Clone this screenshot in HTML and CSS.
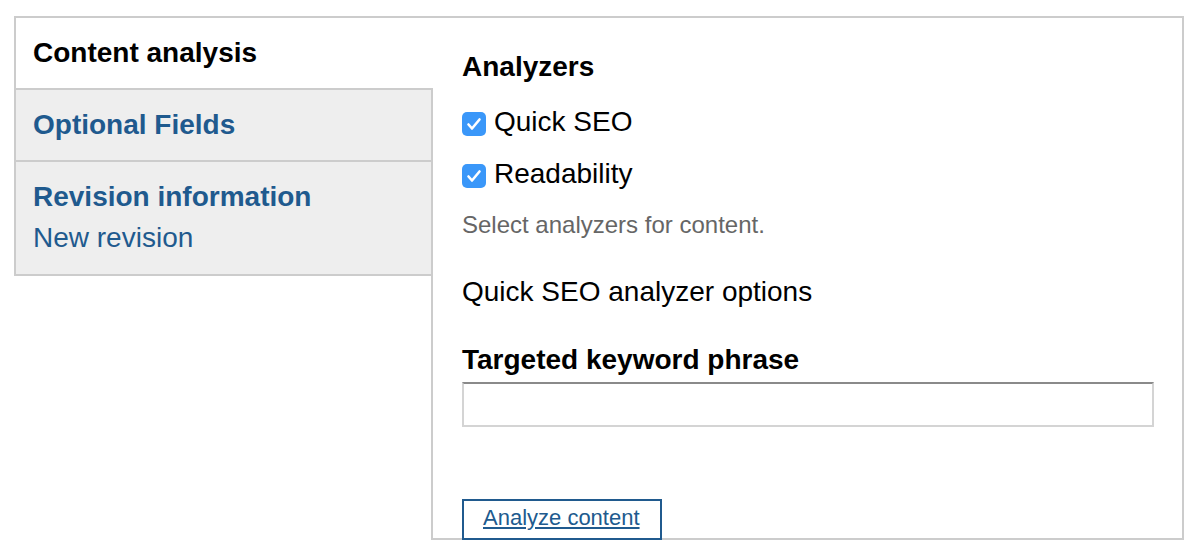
FILE: index.html
```html
<!DOCTYPE html>
<html lang="en">
<head>
    <meta charset="UTF-8">
    <title>Content analysis</title>
    <link rel="stylesheet" href="styles.css">
</head>
<body>
    <div class="vertical-tabs">
        <ul class="tab-list">
            <li class="tab active"><strong>Content analysis</strong></li>
            <li class="tab"><a href="#"><strong>Optional Fields</strong></a></li>
            <li class="tab">
                <a href="#"><strong>Revision information</strong>
                <span class="summary">New revision</span></a>
            </li>
        </ul>

        <div class="tab-pane">
            <div class="legend">Analyzers</div>
            <label class="option">
                <span class="check"><svg width="24" height="24" viewBox="0 0 24 24"><path d="M6.5 12.5l3.5 4 7.5-9" fill="none" stroke="#fff" stroke-width="2.6" stroke-linecap="round" stroke-linejoin="round"/></svg></span>
                Quick SEO
            </label>
            <label class="option">
                <span class="check"><svg width="24" height="24" viewBox="0 0 24 24"><path d="M6.5 12.5l3.5 4 7.5-9" fill="none" stroke="#fff" stroke-width="2.6" stroke-linecap="round" stroke-linejoin="round"/></svg></span>
                Readability
            </label>
            <div class="description">Select analyzers for content.</div>

            <div class="subtitle">Quick SEO analyzer options</div>

            <label class="field-label" for="keyword">Targeted keyword phrase</label>
            <input type="text" id="keyword" class="text-input">

            <button type="button" class="analyze">Analyze content</button>
        </div>
    </div>
</body>
</html>
```

FILE: styles.css
```css
body {
    margin: 0;
    padding: 16px 14px;
    font-family: "Liberation Sans", Arial, Helvetica, sans-serif;
    color: #000;
    background: #fff;
}
.vertical-tabs {
    display: flex;
    align-items: flex-start;
    width: 1170px;
}
.tab-list {
    list-style: none;
    margin: 0 -2px 0 0;
    padding: 0;
    width: 419px;
    box-sizing: border-box;
    border: 2px solid #ccc;
    border-right: none;
    position: relative;
    z-index: 1;
    flex-shrink: 0;
}
.tab {
    padding: 15px 17px;
    font-size: 28px;
    line-height: 40px;
    background: #eee;
    border-top: 2px solid #ccc;
    border-right: 2px solid #ccc;
}
.tab.active {
    background: #fff;
    border-top: none;
    border-right: none;
}
.tab a {
    color: #1f5a8e;
    text-decoration: none;
}
.tab .summary {
    display: block;
    line-height: 42px;
}
.tab-pane {
    flex: 1;
    border: 2px solid #ccc;
    padding: 29px 28px 0 29px;
}
.legend {
    font-size: 28px;
    font-weight: bold;
    line-height: 40px;
    margin-bottom: 15px;
}
.option {
    display: flex;
    align-items: center;
    gap: 8px;
    font-size: 28px;
    line-height: 40px;
    margin-bottom: 12px;
}
.check {
    width: 24px;
    height: 24px;
    margin-top: 4px;
    border-radius: 5px;
    background: #3a97f9;
    display: flex;
}
.description {
    font-size: 24px;
    line-height: 32px;
    color: #666;
    margin-top: 15px;
}
.subtitle {
    font-size: 28px;
    line-height: 40px;
    margin-top: 31px;
}
.field-label {
    display: block;
    font-size: 28px;
    font-weight: bold;
    line-height: 40px;
    margin-top: 28px;
}
.text-input {
    display: block;
    width: 100%;
    height: 45px;
    margin-top: 2px;
    box-sizing: border-box;
    border: 2px solid #d4d4d4;
    border-top-color: #8a8a8a;
    background: #fff;
    font-family: inherit;
    font-size: 24px;
}
.analyze {
    display: block;
    margin: 72px 0 -2px;
    padding: 4px 20px 8px 19px;
    border: 2px solid #205a8e;
    background: #fff;
    color: #205a8e;
    font-family: inherit;
    font-size: 22px;
    line-height: 25px;
    text-decoration: underline;
    cursor: pointer;
}
```
